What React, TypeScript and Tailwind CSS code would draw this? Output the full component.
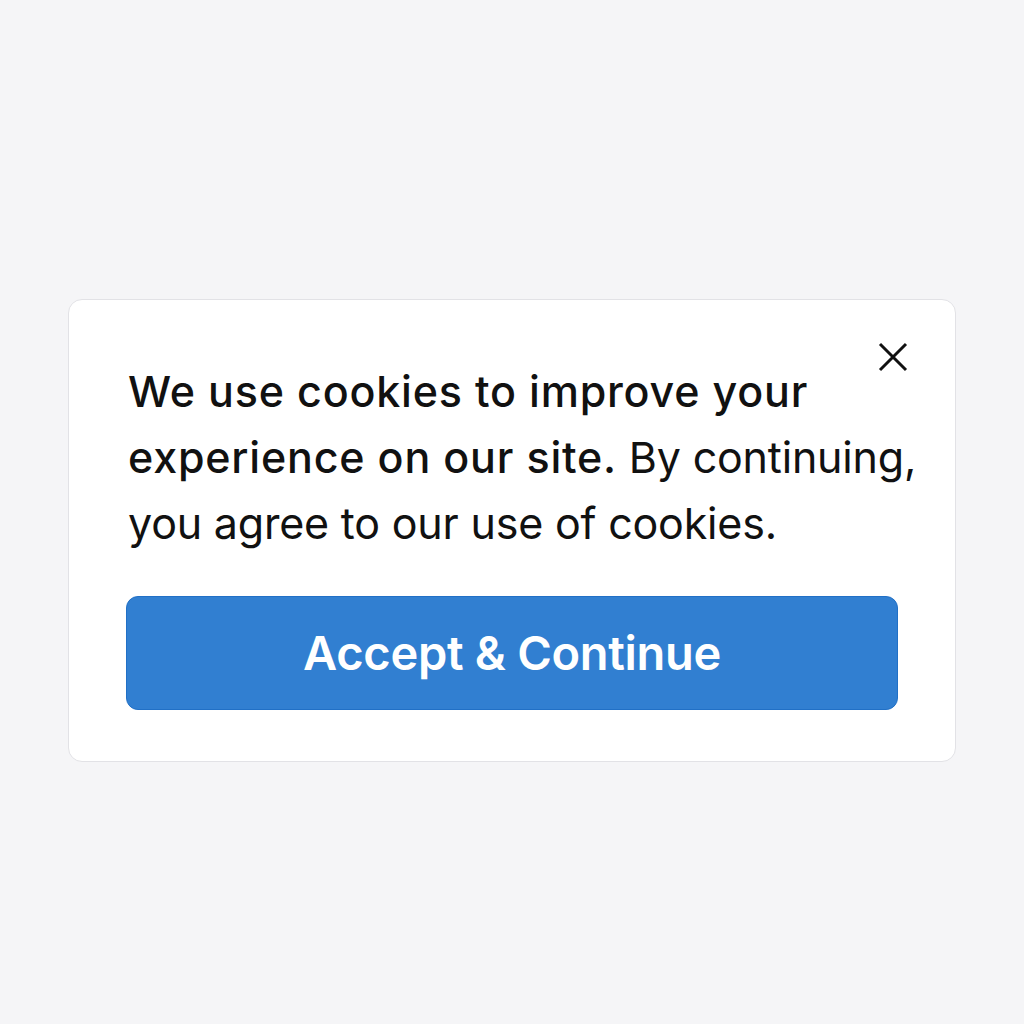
export default function App() {
  return (
    <div className="min-h-screen w-full bg-[#f5f5f7] flex justify-center items-start pt-[299px] font-['Inter',sans-serif]">
      {/* Cookie banner */}
      <div className="relative w-[888px] bg-white border border-[#e2e2e6] rounded-[14px] pt-[58px] pb-[51px] pl-[57px] pr-[57px]">
        <button className="absolute top-[42px] right-[47px] text-[#111111]" aria-label="Close">
          <svg width="30" height="30" viewBox="0 0 30 30" fill="none" stroke="currentColor" strokeWidth="3" strokeLinecap="butt">
            <path d="M2 2 L28 28 M28 2 L2 28" />
          </svg>
        </button>

        <p className="pl-[2px] text-[43px] leading-[66px] text-[#111111] whitespace-nowrap tracking-[-0.2px]">
          <span className="font-medium tracking-[0.8px]">
            We use cookies to improve your
            <br />
            experience on our site.
          </span>{" "}
          By continuing,
          <br />
          you agree to our use of cookies.
        </p>

        <button className="mt-[40px] w-full h-[114px] rounded-[12px] bg-[#317fd1] border border-[#2170c6] text-white text-[47px] font-semibold tracking-[-0.3px]">
          Accept &amp; Continue
        </button>
      </div>
    </div>
  );
}
